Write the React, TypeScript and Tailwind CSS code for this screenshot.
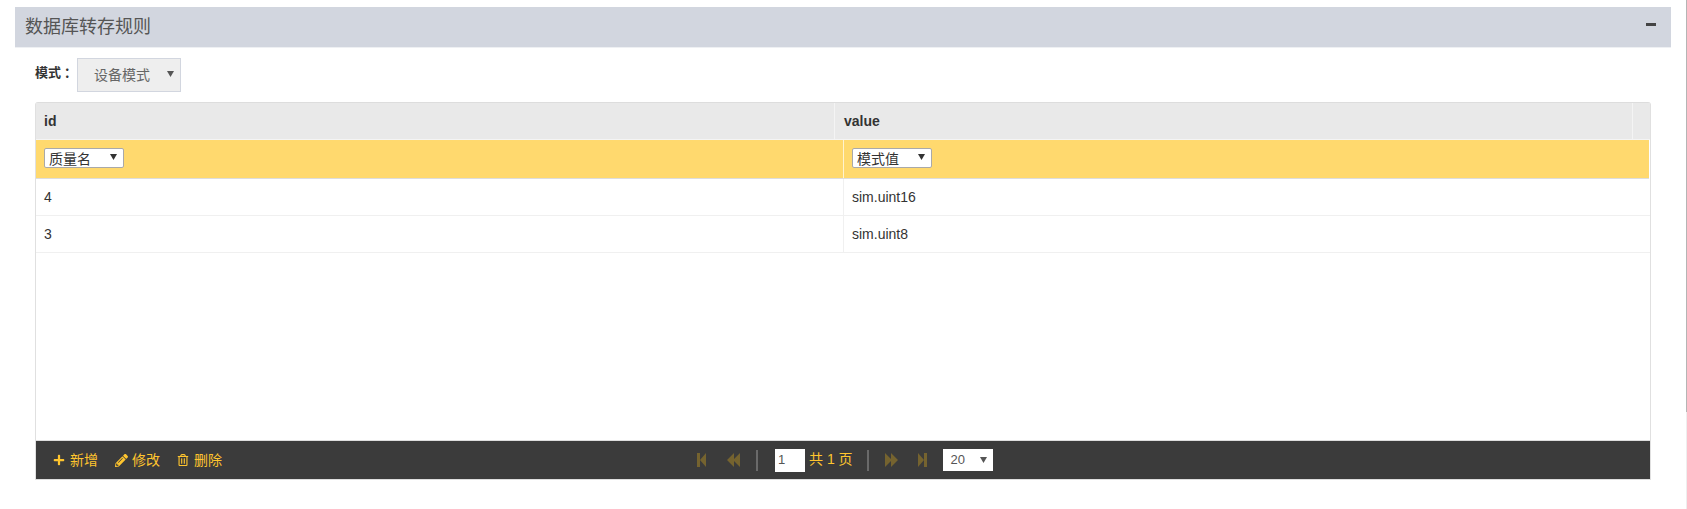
import React from "react";
import { FaPlus, FaPencilAlt, FaRegTrashAlt } from "react-icons/fa";

const font = "font-['Liberation_Sans','Noto_Sans_CJK_SC',sans-serif]";

function Arrow({ className = "" }: { className?: string }) {
  return (
    <svg width="7" height="6" viewBox="0 0 7 6" className={className}>
      <path d="M0 0h7L3.5 6z" fill="currentColor" />
    </svg>
  );
}

function MiniSelect({ label }: { label: string }) {
  return (
    <div className="mb-[2px] flex h-[20px] w-[80px] items-center justify-between rounded-[2px] border border-[#a9a9a9] bg-white pl-[4px] pr-[6px] text-[14px] leading-none text-[#333]">
      <span className="mt-[2px]">{label}</span>
      <Arrow className="mb-[3px] text-[#333]" />
    </div>
  );
}

function Action({ icon, label, gap }: { icon: React.ReactNode; label: string; gap: string }) {
  return (
    <div className={`flex items-center text-[14px] text-[#ffc52e] ${gap}`}>
      {icon}
      <span>{label}</span>
    </div>
  );
}

function Pager({ d, w }: { d: string; w: number }) {
  return (
    <svg width={w} height="14" viewBox={`0 0 ${w} 14`}>
      <path d={d} fill="#75632f" />
    </svg>
  );
}

export default function App() {
  return (
    <div className={`${font} relative h-[509px] w-full overflow-hidden bg-white pl-[15px] pr-[16px] pt-[7px]`}>
      <div className="flex h-[41px] items-center justify-between border-b border-[#eef0f3] bg-[#d2d6df] pl-[10px] pr-[15px]">
        <span className="text-[18px] leading-none text-[#555]">数据库转存规则</span>
        <div className="mb-[5px] h-[3px] w-[10px] bg-[#444]" />
      </div>

      <div className="mt-[10px] flex h-[34px] items-start pl-[20px]">
        <div className="mt-[7px] w-[42px] whitespace-nowrap text-[13px] font-bold leading-[16px] text-[#333]">
          <span>模式</span>
          <span className="ml-[3px]">：</span>
        </div>
        <div className="flex h-[34px] w-[104px] items-center justify-between border border-[#d2d6df] bg-[#eeeeee] pl-[16px] pr-[6px] text-[14px] text-[#666]">
          <span>设备模式</span>
          <Arrow className="mb-[3px] text-[#555]" />
        </div>
      </div>

      <div className="ml-[20px] mt-[10px] flex h-[378px] w-[1616px] flex-col rounded-t-[3px] border-x border-t border-[#dddddd] border-x-[#e0e0e0]">
        <div className="flex h-[37px] border-b border-[#f4f4f4] bg-[#e9e9e9] text-[14px] font-bold text-[#333]">
          <div className="flex w-[799px] items-center border-r border-[#f4f4f4] pl-[8px]">id</div>
          <div className="flex w-[798px] items-center border-r border-[#f4f4f4] pl-[9px]">value</div>
        </div>
        <div className="mr-[1px] flex h-[39px] border-b border-[#dddddd] bg-[#ffd96e]">
          <div className="flex w-[808px] items-center border-r border-[#fff3cf] pl-[8px]"><MiniSelect label="质量名" /></div>
          <div className="flex flex-1 items-center pl-[8px]"><MiniSelect label="模式值" /></div>
        </div>
        <div className="flex h-[37px] border-b border-[#f0f0f0] text-[14px] text-[#333]">
          <div className="flex w-[808px] items-center border-r border-[#f0f0f0] pl-[8px]">4</div>
          <div className="flex flex-1 items-center pl-[8px]">sim.uint16</div>
        </div>
        <div className="flex h-[37px] border-b border-[#f0f0f0] text-[14px] text-[#333]">
          <div className="flex w-[808px] items-center border-r border-[#f0f0f0] pl-[8px]">3</div>
          <div className="flex flex-1 items-center pl-[8px]">sim.uint8</div>
        </div>
        <div className="flex-1" />
        <div className="flex h-[40px] items-center border-y border-y-[#dddddd] bg-[#3b3b3b]">
          <div className="flex w-[661px] items-center gap-[17px] pl-[17px]">
            <Action icon={<FaPlus size={12} />} label="新增" gap="gap-[5px]" />
            <Action icon={<FaPencilAlt size={13} />} label="修改" gap="gap-[4px]" />
            <Action icon={<FaRegTrashAlt size={12} />} label="删除" gap="gap-[5px]" />
          </div>
          <div className="flex items-center">
            <Pager w={9} d="M0 0h3v14H0zM3 7l6-7v14z" />
            <div className="ml-[21px]"><Pager w={13} d="M0 7l7-7v14zM6 7l7-7v14z" /></div>
            <div className="ml-[16px] h-[21px] w-[2px] bg-[#6a6a6a]" />
            <div className="ml-[17px] flex h-[23px] w-[30px] items-center bg-white pl-[3px] text-[13px] text-[#555]">1</div>
            <span className="mb-[2px] ml-[4px] text-[14px] text-[#ffc52e]">共 1 页</span>
            <div className="ml-[14px] h-[21px] w-[2px] bg-[#6a6a6a]" />
            <div className="ml-[16px]"><Pager w={13} d="M0 0l7 7-7 7zM6 0l7 7-7 7z" /></div>
            <div className="ml-[20px]"><Pager w={9} d="M0 0l6 7-6 7zM6 0h3v14H6z" /></div>
            <div className="ml-[16px] flex h-[22px] w-[50px] items-center justify-between bg-white pl-[8px] pr-[6px] text-[13px] text-[#555]">
              <span>20</span>
              <Arrow className="text-[#555]" />
            </div>
          </div>
        </div>
      </div>

      <div className="absolute right-0 top-0 h-full w-[1px] bg-[#eeeeee]">
        <div className="h-[412px] w-full bg-[#b5b5b5]" />
      </div>
    </div>
  );
}
